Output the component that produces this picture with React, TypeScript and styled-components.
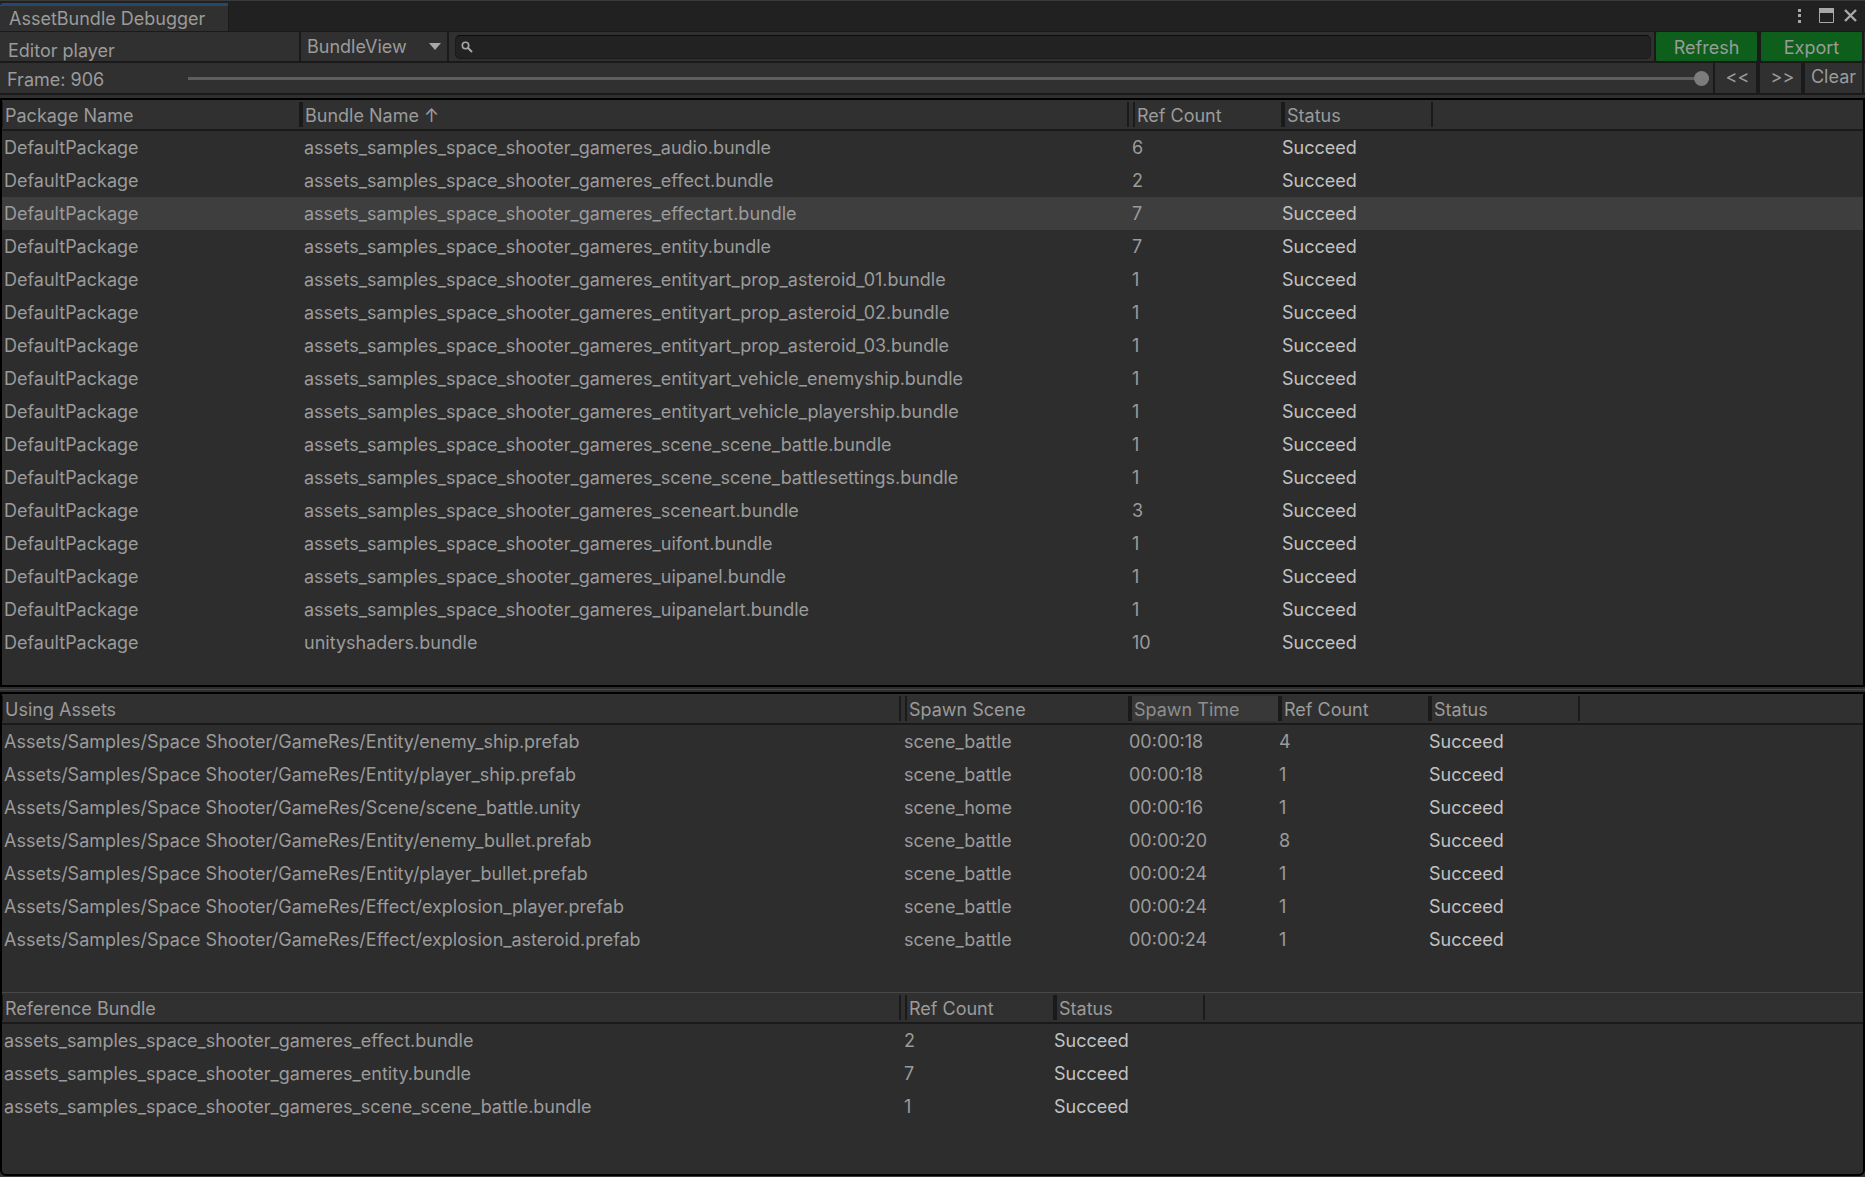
import React, { useState } from "react";
import styled, { createGlobalStyle, css } from "styled-components";

const c = {
  window: "#303030",
  panel: "#2d2d2d",
  strip: "#212121",
  line: "#1a1a1a",
  text: "#9b9b9b",
  dim: "#8e8e8e",
  bright: "#c2c2c2",
  selected: "#3e3e3e",
  hover: "#383838",
  green: "#0e5f1b",
};

const GlobalStyle = createGlobalStyle`
  *, *::before, *::after { box-sizing: border-box; }
  body { margin: 0; background: ${c.window}; }
  button, input, select { font: inherit; color: inherit; margin: 0; }
`;

const Window = styled.main`
  display: flex;
  flex-direction: column;
  height: 100vh;
  border-top: 1px solid #3a3a3a;
  border-bottom: 1px solid #3a3a3a;
  background: ${c.window};
  color: ${c.text};
  font: 18px/24px Inter, "Noto Sans", sans-serif;
`;

const TabStrip = styled.header`
  display: flex;
  justify-content: space-between;
  flex: none;
  height: 31px;
  padding-top: 2px;
  background: ${c.strip};
  border-bottom: 1px solid ${c.line};
`;

const Tab = styled.h1`
  margin: 0;
  padding: 1px 23px 0 9px;
  border-top: 3px solid #25496d;
  border-right: 1px solid ${c.line};
  border-radius: 4px 2px 0 0;
  background: ${c.window};
  font-size: 18px;
  font-weight: 400;
`;

const WindowControls = styled.div`
  display: flex;
  align-items: center;
  gap: 9px;
  padding: 0 7px 4px 0;
`;

const IconButton = styled.button`
  display: flex;
  padding: 0;
  border: 0;
  background: none;
  color: #a8a8a8;
`;

const Toolbar = styled.div<{ $height: number }>`
  display: flex;
  flex: none;
  height: ${(p) => p.$height}px;
  padding-right: 1px;
  border-bottom: 2px solid ${c.line};
`;

const PlayerName = styled.div`
  width: 299px;
  padding: 7px 8px 0;
`;

const SelectBox = styled.div`
  display: grid;
  align-items: center;
  width: 150px;
  border: solid ${c.line};
  border-width: 0 2px;
  svg { grid-area: 1 / 1; justify-self: end; margin-right: 6px; pointer-events: none; }
`;

const ViewSelect = styled.select`
  grid-area: 1 / 1;
  width: 100%;
  height: 28px;
  padding: 0 24px 0 6px;
  border: 0;
  appearance: none;
  background: none;
  outline: none;
`;

const SearchBox = styled.label`
  display: flex;
  align-items: center;
  flex: 1;
  gap: 6px;
  margin: 3px 3px 2px 6px;
  padding: 0 5px;
  border: 1px solid ${c.line};
  border-top-color: #0b0b0b;
  border-radius: 5px;
  background: #222;
`;

const SearchInput = styled.input`
  flex: 1;
  min-width: 0;
  height: 20px;
  padding: 0;
  border: 0;
  outline: none;
  background: none;
`;

const ToolButton = styled.button<{ $width: number; $nudge?: boolean }>`
  flex: none;
  width: ${(p) => p.$width}px;
  padding: 0 0 2px ${(p) => (p.$nudge ? 4 : 0)}px;
  border: solid ${c.line};
  border-width: 0 2px;
  background: none;
`;

const ActionCell = styled.div`
  display: flex;
  border: solid ${c.line};
  border-width: 0 2px;
`;

const ActionButton = styled.button`
  width: 101px;
  padding: 2px 0 0;
  border: 0;
  border-radius: 2px;
  background: ${c.green};
`;

const FrameLabel = styled.label`
  width: 188px;
  padding: 5px 7px 0;
`;

const FrameSlider = styled.input`
  && { margin-right: 4px; }
  flex: 1;
  align-self: center;
  min-width: 0;
  height: 15px;
  appearance: none;
  background: linear-gradient(#5e5e5e, #5e5e5e) center / 100% 3px no-repeat;
  &::-webkit-slider-thumb {
    appearance: none;
    width: 15px;
    height: 15px;
    border-radius: 50%;
    background: #7c7c7c;
  }
`;

const Panels = styled.div`
  display: flex;
  flex-direction: column;
  flex: 1;
  min-height: 0;
  padding-top: 3px;
`;

const Panel = styled.section<{ $grow: number; $rounded?: boolean }>`
  display: flex;
  flex-direction: column;
  flex: ${(p) => p.$grow} 1 0;
  min-height: 0;
  border: 2px solid #000;
  border-radius: ${(p) => (p.$rounded ? "0 0 6px 6px" : "0")};
  background: ${c.panel};
`;

const Splitter = styled.div`
  flex: none;
  height: 5px;
  border: solid ${c.panel};
  border-width: 2px 0;
  background: #484848;
`;

const Pane = styled.div<{ $grow: number; $divided?: boolean }>`
  flex: ${(p) => p.$grow} 1 0;
  min-height: 0;
  overflow: hidden auto;
  ${(p) => p.$divided && css`border-top: 1px solid #484848;`}
`;

const Table = styled.table`
  width: 100%;
  table-layout: fixed;
  border-spacing: 0;
`;

const Column = styled.col<{ $width?: number }>`
  width: ${(p) => (p.$width ? `${p.$width}px` : "auto")};
`;

const HeadRow = styled.tr`
  background: ${c.window};
`;

const HeadCell = styled.th`
  padding: 2px 0;
  border-bottom: 2px solid ${c.line};
  color: ${c.text};
  font-weight: 400;
  text-align: left;
`;

/* Column titles sit 4px right of their cells once past the stretching column. */
const HeadTitle = styled.div<{ $kind: Kind; $hovered?: boolean }>`
  height: 25px;
  padding-left: 2px;
  margin: ${(p) => (p.$kind === "fixed" ? "0 -4px 0 4px" : "0")};
  border: solid ${c.line};
  border-width: 0 2px;
  ${(p) => p.$kind === "first" && css`border-left-width: 1px;`}
  line-height: 27px;
  white-space: nowrap;
  ${(p) => p.$hovered && css`background: ${c.hover}; color: ${c.dim};`}
`;

const Row = styled.tr<{ $selected?: boolean }>`
  background: ${(p) => (p.$selected ? c.selected : "transparent")};
`;

const Cell = styled.td<{ $bright?: boolean }>`
  height: 33px;
  padding: 0 0 0 3px;
  color: ${(p) => (p.$bright ? c.bright : c.text)};
  white-space: nowrap;
  &:first-child { padding-left: 2px; }
`;

type Kind = "first" | "stretch" | "fixed";
type Col = { title: string; width: number; kind: Kind; hovered?: boolean };

function DataTable({ cols, rows, selected }: { cols: Col[]; rows: string[][]; selected?: number }) {
  return (
    <Table>
      <colgroup>
        {cols.map((col) => <Column key={col.title} $width={col.width} />)}
        <Column />
      </colgroup>
      <thead>
        <HeadRow>
          {cols.map((col) => (
            <HeadCell key={col.title} scope="col">
              <HeadTitle $kind={col.kind} $hovered={col.hovered}>{col.title}</HeadTitle>
            </HeadCell>
          ))}
          <HeadCell as="td" />
        </HeadRow>
      </thead>
      <tbody>
        {rows.map((row, i) => (
          <Row key={i} $selected={i === selected}>
            {row.map((value, j) => (
              <Cell key={j} $bright={j === row.length - 1}>{value}</Cell>
            ))}
            <Cell />
          </Row>
        ))}
      </tbody>
    </Table>
  );
}

const bundleCols: Col[] = [
  { title: "Package Name", width: 299, kind: "first" },
  { title: "Bundle Name ↑", width: 828, kind: "stretch" },
  { title: "Ref Count", width: 150, kind: "fixed" },
  { title: "Status", width: 150, kind: "fixed" },
];

const bundles: [string, string][] = [
  ["audio", "6"],
  ["effect", "2"],
  ["effectart", "7"],
  ["entity", "7"],
  ["entityart_prop_asteroid_01", "1"],
  ["entityart_prop_asteroid_02", "1"],
  ["entityart_prop_asteroid_03", "1"],
  ["entityart_vehicle_enemyship", "1"],
  ["entityart_vehicle_playership", "1"],
  ["scene_scene_battle", "1"],
  ["scene_scene_battlesettings", "1"],
  ["sceneart", "3"],
  ["uifont", "1"],
  ["uipanel", "1"],
  ["uipanelart", "1"],
];

const bundleFile = (name: string) => `assets_samples_space_shooter_gameres_${name}.bundle`;

const bundleRows = [
  ...bundles.map(([name, refs]) => ["DefaultPackage", bundleFile(name), refs, "Succeed"]),
  ["DefaultPackage", "unityshaders.bundle", "10", "Succeed"],
];

const assetCols: Col[] = [
  { title: "Using Assets", width: 899, kind: "first" },
  { title: "Spawn Scene", width: 225, kind: "fixed" },
  { title: "Spawn Time", width: 150, kind: "fixed", hovered: true },
  { title: "Ref Count", width: 150, kind: "fixed" },
  { title: "Status", width: 150, kind: "fixed" },
];

const assetRows = [
  ["Entity/enemy_ship.prefab", "scene_battle", "00:00:18", "4"],
  ["Entity/player_ship.prefab", "scene_battle", "00:00:18", "1"],
  ["Scene/scene_battle.unity", "scene_home", "00:00:16", "1"],
  ["Entity/enemy_bullet.prefab", "scene_battle", "00:00:20", "8"],
  ["Entity/player_bullet.prefab", "scene_battle", "00:00:24", "1"],
  ["Effect/explosion_player.prefab", "scene_battle", "00:00:24", "1"],
  ["Effect/explosion_asteroid.prefab", "scene_battle", "00:00:24", "1"],
].map(([path, ...rest]) => [`Assets/Samples/Space Shooter/GameRes/${path}`, ...rest, "Succeed"]);

const referenceCols: Col[] = [
  { title: "Reference Bundle", width: 899, kind: "first" },
  { title: "Ref Count", width: 150, kind: "fixed" },
  { title: "Status", width: 150, kind: "fixed" },
];

const referenceRows = [
  [bundleFile("effect"), "2", "Succeed"],
  [bundleFile("entity"), "7", "Succeed"],
  [bundleFile("scene_scene_battle"), "1", "Succeed"],
];

export default function App() {
  const [frame, setFrame] = useState(906);
  const [query, setQuery] = useState("");
  return (
    <Window>
      <GlobalStyle />
      <TabStrip>
        <Tab>AssetBundle Debugger</Tab>
        <WindowControls>
          <IconButton aria-label="Menu">
            <svg width="15" height="15" fill="currentColor">
              <rect x="7" y="1" width="3" height="3" />
              <rect x="7" y="6" width="3" height="3" />
              <rect x="7" y="12" width="3" height="3" />
            </svg>
          </IconButton>
          <IconButton aria-label="Maximize">
            <svg width="19" height="15" fill="none" stroke="currentColor">
              <path d="M4.500 .5h14v14h-14z" />
              <path d="M4 2.500h15" strokeWidth="5" />
            </svg>
          </IconButton>
          <IconButton aria-label="Close">
            <svg width="15" height="15" fill="none" stroke="currentColor" strokeWidth="2.400">
              <path d="M2 2l11 11M13 2L2 13" />
            </svg>
          </IconButton>
        </WindowControls>
      </TabStrip>

      <Toolbar $height={31}>
        <PlayerName>Editor player</PlayerName>
        <SelectBox>
          <ViewSelect aria-label="View" defaultValue="BundleView">
            <option>BundleView</option>
            <option>AssetView</option>
          </ViewSelect>
          <svg width="12" height="7" fill="#a8a8a8"><path d="M0 0h12L6 7z" /></svg>
        </SelectBox>
        <SearchBox aria-label="Search">
          <svg width="12" height="12" fill="none" stroke="#a8a8a8" strokeWidth="1.600">
            <circle cx="4.500" cy="4.500" r="3.200" />
            <path d="M7 7l4 4" strokeWidth="2" />
          </svg>
          <SearchInput value={query} onChange={(e) => setQuery(e.target.value)} />
        </SearchBox>
        <ActionCell><ActionButton>Refresh</ActionButton></ActionCell>
        <ActionCell><ActionButton>Export</ActionButton></ActionCell>
      </Toolbar>

      <Toolbar $height={32}>
        <FrameLabel htmlFor="frame">Frame: {frame}</FrameLabel>
        <FrameSlider
          id="frame"
          type="range"
          min={0}
          max={906}
          value={frame}
          onChange={(e) => setFrame(Number(e.target.value))}
        />
        <ToolButton $width={45} $nudge>&lt;&lt;</ToolButton>
        <ToolButton $width={45} $nudge>&gt;&gt;</ToolButton>
        <ToolButton $width={61}>Clear</ToolButton>
      </Toolbar>

      <Panels>
        <Panel $grow={585}>
          <Pane $grow={1}>
            <DataTable cols={bundleCols} rows={bundleRows} selected={2} />
          </Pane>
        </Panel>
        <Splitter />
        <Panel $grow={480} $rounded>
          <Pane $grow={298}>
            <DataTable cols={assetCols} rows={assetRows} />
          </Pane>
          <Pane $grow={181} $divided>
            <DataTable cols={referenceCols} rows={referenceRows} />
          </Pane>
        </Panel>
      </Panels>
    </Window>
  );
}
